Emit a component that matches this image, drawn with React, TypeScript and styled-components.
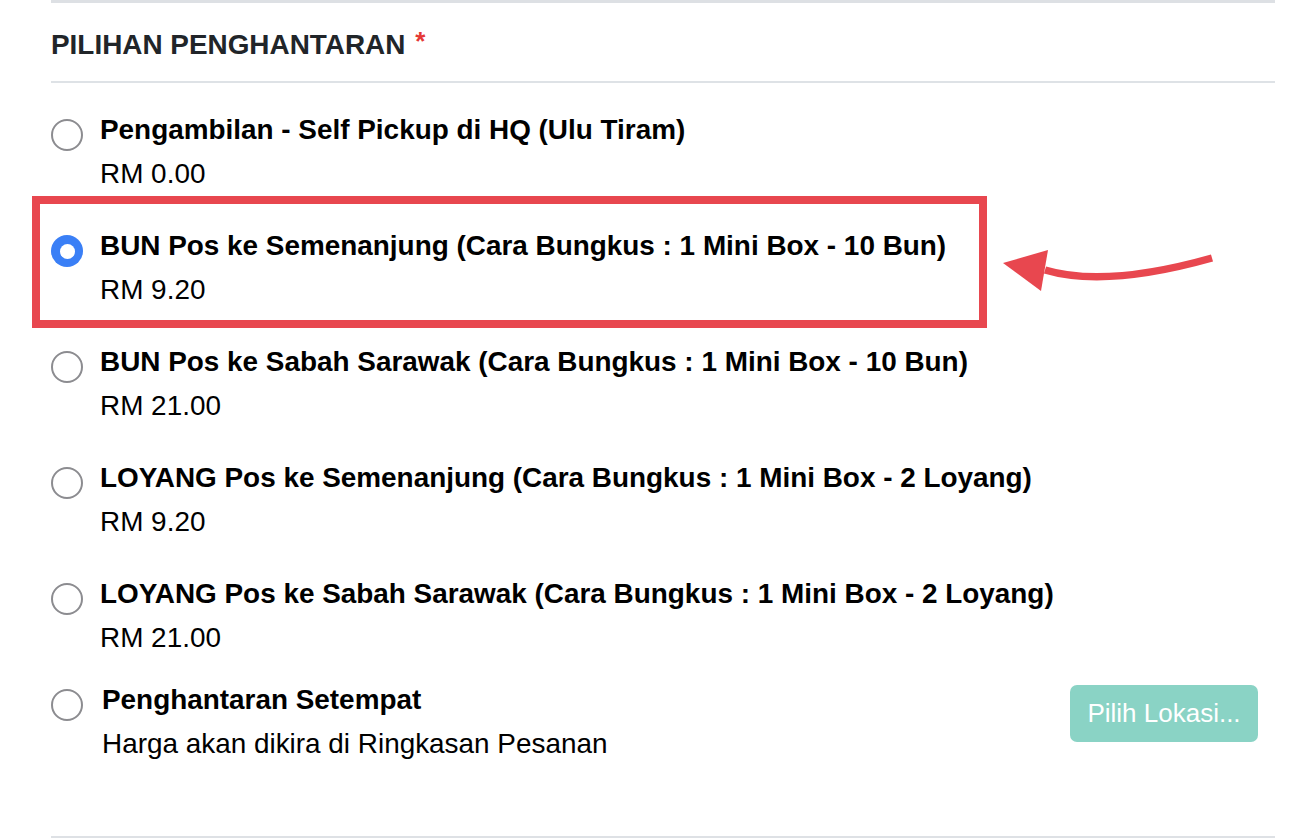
import React from "react";
import styled, { createGlobalStyle } from "styled-components";

const Global = createGlobalStyle`
  html, body { margin: 0; padding: 0; background: #fff; }
  body { font-family: "Liberation Sans", Arial, Helvetica, sans-serif; }
  * { box-sizing: border-box; }
`;

const Page = styled.div`
  width: 1304px;
  height: 839px;
  overflow: hidden;
  padding: 0 29px 0 51px;
`;

const Card = styled.section`
  border-top: 3px solid #dde0e4;
  border-bottom: 2px solid #dee1e5;
  padding-bottom: 74px;
`;

const Header = styled.h2`
  margin: 0;
  height: 80px;
  padding-top: 6px;
  display: flex;
  align-items: center;
  border-bottom: 2px solid #dee2e6;
  font-size: 27.9px;
  font-weight: 700;
  color: #212529;
  letter-spacing: 0;
`;

const Required = styled.span`
  color: #e53935;
  margin-left: 10px;
  position: relative;
  top: -4px;
  font-size: 26px;
`;

const Options = styled.div`
  position: relative;
  padding-top: 29px;
`;

const Option = styled.label<{ $gap: number }>`
  display: flex;
  align-items: flex-start;
  margin-top: ${(p) => p.$gap}px;
  cursor: pointer;
`;

const Radio = styled.span<{ $checked?: boolean }>`
  flex: none;
  width: 32px;
  height: 32px;
  margin-top: 7px;
  border-radius: 50%;
  position: relative;
  border: ${(p) => (p.$checked ? "none" : "2.6px solid #8c8c90")};
  background: ${(p) => (p.$checked ? "#3a7ff6" : "#fff")};
  &::after {
    content: "";
    display: ${(p) => (p.$checked ? "block" : "none")};
    position: absolute;
    left: 50%;
    top: 50%;
    width: 15px;
    height: 15px;
    margin: -7.5px 0 0 -7.5px;
    border-radius: 50%;
    background: #fff;
  }
`;

const Texts = styled.div<{ $indent?: number }>`
  margin-left: ${(p) => 17 + (p.$indent ?? 0)}px;
  display: flex;
  flex-direction: column;
  gap: 8px;
`;

const Title = styled.div`
  font-size: 27.9px;
  line-height: 36px;
  font-weight: 700;
  color: #000;
  white-space: nowrap;
`;

const Price = styled.div`
  font-size: 27.9px;
  line-height: 36px;
  color: #000;
  white-space: nowrap;
`;

const LocationButton = styled.button`
  margin: 3px 17px 0 auto;
  width: 188px;
  height: 57px;
  border: none;
  border-radius: 7px;
  background: #8ad3c5;
  color: #fff;
  font-family: "Liberation Sans", Arial, sans-serif;
  font-size: 26px;
  padding: 0;
  cursor: pointer;
`;

const Highlight = styled.div`
  position: absolute;
  left: -19px;
  top: 113px;
  width: 955px;
  height: 132px;
  border: 8px solid #e8474f;
  pointer-events: none;
`;

const ArrowSvg = styled.svg`
  position: absolute;
  left: 949px;
  top: 157px;
  width: 220px;
  height: 60px;
  overflow: visible;
  pointer-events: none;
`;

const options = [
  { title: "Pengambilan - Self Pickup di HQ (Ulu Tiram)", price: "RM 0.00" },
  { title: "BUN Pos ke Semenanjung (Cara Bungkus : 1 Mini Box - 10 Bun)", price: "RM 9.20", checked: true },
  { title: "BUN Pos ke Sabah Sarawak (Cara Bungkus : 1 Mini Box - 10 Bun)", price: "RM 21.00" },
  { title: "LOYANG Pos ke Semenanjung (Cara Bungkus : 1 Mini Box - 2 Loyang)", price: "RM 9.20" },
  { title: "LOYANG Pos ke Sabah Sarawak (Cara Bungkus : 1 Mini Box - 2 Loyang)", price: "RM 21.00" },
];

export default function App() {
  return (
    <Page>
      <Global />
      <Card>
        <Header>
          PILIHAN PENGHANTARAN<Required>*</Required>
        </Header>
        <Options>
          {options.map((o, i) => (
            <Option key={o.title} $gap={i === 0 ? 0 : 36}>
              <Radio $checked={o.checked} />
              <Texts>
                <Title>{o.title}</Title>
                <Price>{o.price}</Price>
              </Texts>
            </Option>
          ))}
          <Option $gap={26}>
            <Radio />
            <Texts $indent={2}>
              <Title>Penghantaran Setempat</Title>
              <Price>Harga akan dikira di Ringkasan Pesanan</Price>
            </Texts>
            <LocationButton type="button">Pilih Lokasi...</LocationButton>
          </Option>
          <Highlight />
          <ArrowSvg viewBox="0 0 220 60">
            <path d="M212 18 Q105.5 48 45 30" fill="none" stroke="#e8474f" strokeWidth="7.5" />
            <polygon points="3,23 48,10 41,51" fill="#e8474f" />
          </ArrowSvg>
        </Options>
      </Card>
    </Page>
  );
}
